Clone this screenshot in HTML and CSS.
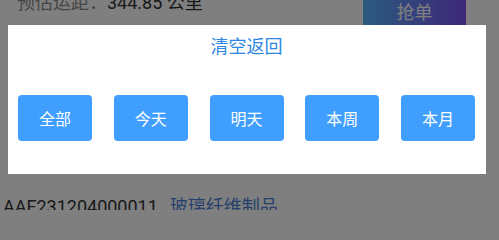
FILE: index.html
```html
<!DOCTYPE html>
<html lang="zh-CN">
<head>
<meta charset="utf-8">
<title>清空返回</title>
<link rel="stylesheet" href="styles.css">
</head>
<body>
<div class="page">
  <div class="order-head">
    <div class="distance"><span class="distance-label">预估运距：</span><span class="distance-value">344.85 公里</span></div>
    <button class="grab-btn">抢单</button>
  </div>
  <div class="order-body"></div>
  <div class="order-row">
    <span class="order-no">AAF231204000011</span>
    <span class="order-goods">玻璃纤维制品</span>
  </div>
</div>

<div class="mask"></div>
<div class="dialog">
  <div class="dialog-title">清空返回</div>
  <div class="dialog-options">
    <button class="option">全部</button>
    <button class="option">今天</button>
    <button class="option">明天</button>
    <button class="option">本周</button>
    <button class="option">本月</button>
  </div>
</div>
</body>
</html>
```

FILE: styles.css
```css
html, body {
  margin: 0;
  padding: 0;
  width: 499px;
  height: 210px;
  background: #ffffff;
  overflow: hidden;
  font-family: Roboto, "Noto Sans CJK SC", sans-serif;
}

.page {
  width: 499px;
  height: 210px;
  overflow: hidden;
}

.order-head {
  display: flex;
  margin-top: -6px;
  height: 31px;
  padding: 0 33px 0 17px;
}

.distance {
  align-self: flex-start;
  font-size: 18px;
  line-height: 18px;
  white-space: nowrap;
}

.distance-label {
  color: #8c8c8c;
}

.distance-value {
  color: #333333;
}

.grab-btn {
  align-self: flex-end;
  margin-left: auto;
  width: 103px;
  height: 27px;
  border: 0;
  padding: 0;
  background: linear-gradient(90deg, #56b6ff 0%, #7c4ff0 100%);
  color: #ffffff;
  font-family: "Noto Sans CJK SC", sans-serif;
  font-size: 18px;
  line-height: 27px;
}

.order-body {
  height: 173px;
}

.order-row {
  display: flex;
  padding-left: 3px;
  font-size: 18px;
  line-height: 18px;
  white-space: nowrap;
}

.order-no {
  color: #333333;
}

.order-goods {
  margin-left: 12px;
  color: #4b82d6;
}

.mask {
  position: fixed;
  inset: 0;
  background: rgba(0, 0, 0, 0.5);
}

.dialog {
  position: fixed;
  left: 8px;
  top: 25px;
  width: 478px;
  height: 149px;
  box-sizing: border-box;
  background: #ffffff;
  padding: 8px 11px 0 10px;
}

.dialog-title {
  text-align: center;
  color: #2d87e2;
  font-family: "Noto Sans CJK SC", sans-serif;
  font-size: 18px;
  line-height: 24px;
}

.dialog-options {
  display: flex;
  justify-content: space-between;
  margin-top: 38px;
}

.option {
  width: 74px;
  height: 46px;
  border: 0;
  border-radius: 4px;
  padding: 0;
  background: #409eff;
  color: #ffffff;
  font-family: "Noto Sans CJK SC", sans-serif;
  font-size: 16px;
}
```
